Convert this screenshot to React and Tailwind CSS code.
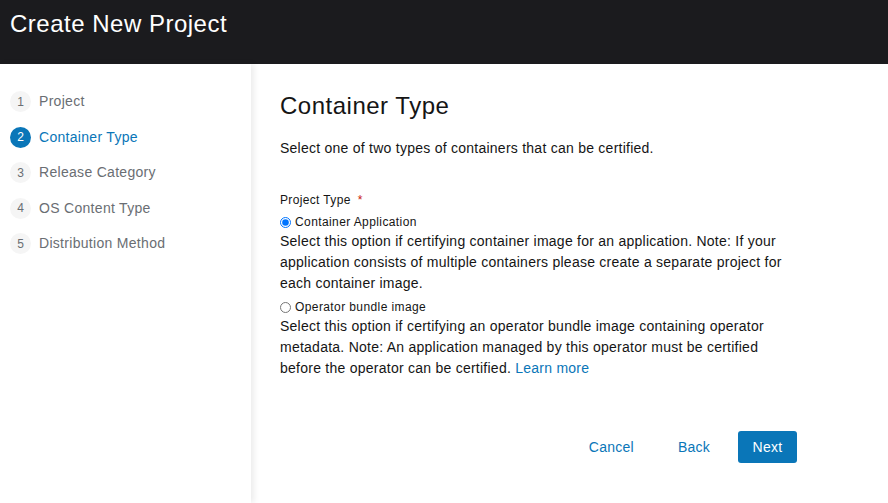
import React from "react";

const steps = ["Project", "Container Type", "Release Category", "OS Content Type", "Distribution Method"];

export default function App() {
  return (
    <div className="w-[888px] h-[503px] flex flex-col bg-white overflow-hidden" style={{ fontFamily: '"Liberation Sans", Arial, sans-serif' }}>
      <header className="h-16 shrink-0 bg-[#1b1b1e] px-[10px] pt-[9px]">
        <h1 className="text-[24px] leading-[30px] text-white tracking-[0.5px]">Create New Project</h1>
      </header>
      <div className="flex flex-1 min-h-0">
        <nav className="w-[251px] shrink-0 bg-white shadow-[3px_0_6px_rgba(0,0,0,0.08)] z-10 pt-[27px] pl-[10px]">
          <ul className="flex flex-col gap-[14.5px]">
            {steps.map((s, i) => {
              const active = i === 1;
              return (
                <li key={s} className="flex items-center gap-[8px] h-[21px]">
                  <span className={`w-[21px] h-[21px] rounded-full flex items-center justify-center text-[12px] ${active ? "bg-[#0a76b8] text-white" : "bg-[#f5f5f5] text-[#6a6e73]"}`}>{i + 1}</span>
                  <span className={`text-[14px] tracking-[0.3px] ${active ? "text-[#0a76b8]" : "text-[#6a6e73]"}`}>{s}</span>
                </li>
              );
            })}
          </ul>
        </nav>
        <main className="flex-1 pl-[29px] pt-[28px]">
          <div className="w-[517px] text-[#151515] tracking-[0.25px]">
            <h2 className="text-[24px] leading-[28px] tracking-[0.5px] text-[#151515]">Container Type</h2>
            <p className="mt-[18px] text-[14px] leading-[20px]">Select one of two types of containers that can be certified.</p>
            <div className="mt-[33px] text-[12px] leading-[18px] tracking-[0.35px] flex items-center">
              Project Type<span className="text-[#c9190b] ml-[7px]">*</span>
            </div>
            <label className="mt-[4px] flex items-center gap-[4px] text-[12px] leading-[18px] tracking-[0.4px]">
              <input type="radio" name="pt" defaultChecked className="w-[11px] h-[11px] m-0" />
              Container Application
            </label>
            <p className="text-[14px] leading-[21px] text-[#151515]">Select this option if certifying container image for an application. Note: If your application consists of multiple containers please create a separate project for each container image.</p>
            <label className="mt-[4px] flex items-center gap-[4px] text-[12px] leading-[18px] tracking-[0.4px]">
              <input type="radio" name="pt" className="w-[11px] h-[11px] m-0" />
              Operator bundle image
            </label>
            <p className="text-[14px] leading-[21px]">Select this option if certifying an operator bundle image containing operator metadata. Note: An application managed by this operator must be certified before the operator can be certified. <a className="text-[#0a76b8]" href="#">Learn more</a></p>
            <div className="mt-[52px] flex justify-end items-center">
              <button className="text-[14px] text-[#0a76b8] px-[12px] h-[32px]">Cancel</button>
              <button className="ml-[20px] text-[14px] text-[#0a76b8] px-[12px] h-[32px]">Back</button>
              <button className="ml-[16px] text-[14px] text-white bg-[#0a76b8] rounded-[3px] w-[59px] h-[32px]">Next</button>
            </div>
          </div>
        </main>
      </div>
    </div>
  );
}
